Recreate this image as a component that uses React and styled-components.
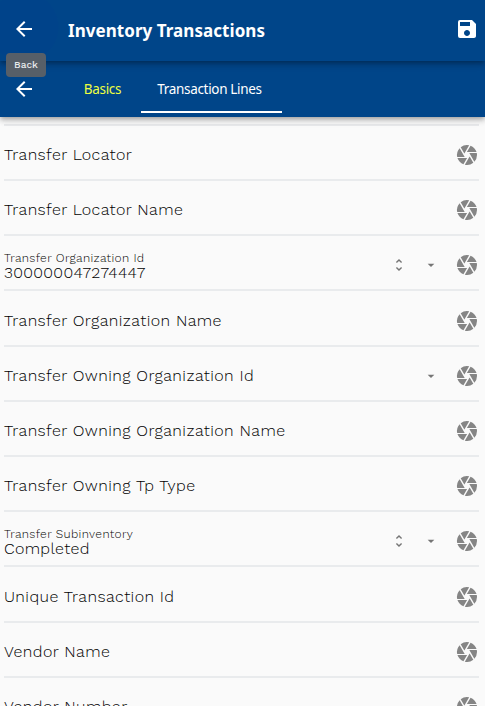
import React from 'react';
import styled, { createGlobalStyle } from 'styled-components';
import { MdArrowBack, MdSave, MdCamera, MdUnfoldMore, MdArrowDropDown } from 'react-icons/md';

const GlobalStyle = createGlobalStyle`
  * { box-sizing: border-box; }
  body { margin: 0; background: #fafafa; overflow: hidden; }
`;

const Screen = styled.div`
  width: 485px;
  height: 706px;
  overflow: hidden;
  display: flex;
  flex-direction: column;
  background: #fafafa;
  font-family: 'Work Sans', Inter, sans-serif;
`;

const AppBar = styled.header`
  position: relative;
  z-index: 3;
  flex: none;
  height: 61px;
  display: flex;
  align-items: center;
  padding: 0 6px 3px 12px;
  background: radial-gradient(circle at 24px 27px, #00438a 34px, #004589 35px);
  color: #fff;
  box-shadow: 0 2px 4px -1px rgba(0, 0, 0, 0.2), 0 4px 5px rgba(0, 0, 0, 0.14),
    0 1px 10px rgba(0, 0, 0, 0.12);
`;

const IconButton = styled.button`
  display: flex;
  padding: 0;
  border: 0;
  background: none;
  color: #fff;
`;

const Title = styled.h1`
  flex: 1;
  margin: 3px 0 0 32px;
  font: 700 17px/24px 'Noto Sans', sans-serif;
  letter-spacing: 0.05px;
  white-space: nowrap;
`;

const Tooltip = styled.div`
  position: absolute;
  left: 6px;
  top: 53px;
  width: 40px;
  height: 24px;
  display: flex;
  align-items: center;
  justify-content: center;
  padding-bottom: 2px;
  border-radius: 4px;
  background: #575f68;
  color: #e9ebed;
  font-size: 10px;
  font-weight: 500;
`;

const TabBar = styled.nav`
  position: relative;
  z-index: 2;
  flex: none;
  height: 56px;
  display: flex;
  align-items: center;
  padding-left: 12px;
  background: #004589;
  box-shadow: 0 2px 4px -1px rgba(0, 0, 0, 0.2), 0 4px 5px rgba(0, 0, 0, 0.14),
    0 1px 10px rgba(0, 0, 0, 0.12);
`;

const Tabs = styled.div`
  display: flex;
  align-self: flex-start;
  height: 52px;
  margin-left: 28px;
`;

const Tab = styled.div`
  width: ${(p) => p.$width}px;
  display: flex;
  align-items: center;
  justify-content: center;
  padding: ${(p) => (p.$active ? '6px 4px 0 0' : '4px 0 0')};
  border-bottom: ${(p) => (p.$active ? '2px solid #fff' : '0')};
  color: ${(p) => (p.$active ? '#fff' : '#eeff41')};
  font: 400 13.5px/20px 'Noto Sans', sans-serif;
  letter-spacing: -0.32px;
  white-space: nowrap;
`;

const Fields = styled.main`
  flex: none;
  display: flex;
  flex-direction: column;
  margin: 6.85px 6px 0 4px;
  border-top: 2px solid #e9eaec;
`;

const Field = styled.div`
  flex: none;
  height: 55.2px;
  display: flex;
  align-items: center;
  padding-top: 5.2px;
  border-bottom: 2px solid #e9ebed;
  color: #757575;
`;

const Texts = styled.div`
  flex: 1;
  display: flex;
  flex-direction: column;
  padding-top: ${(p) => (p.$filled ? 2 : 0)}px;
`;

const Label = styled.span`
  color: #000;
  font-size: ${(p) => (p.$small ? 12 : 16)}px;
  font-weight: 300;
  line-height: ${(p) => (p.$small ? 14 : 20)}px;
  letter-spacing: ${(p) => (p.$small ? 0.34 : 0.42)}px;
  white-space: nowrap;
`;

const Value = styled.span`
  color: #000;
  font-size: 16px;
  font-weight: 300;
  line-height: 16px;
  letter-spacing: 0.34px;
`;

const Action = styled.span`
  display: flex;
  justify-content: center;
  width: 32px;
`;

const Shutter = styled.span`
  display: flex;
  margin-left: 8px;
  color: #858585;
`;

const fields = [
  { label: 'Transfer Locator' },
  { label: 'Transfer Locator Name' },
  { label: 'Transfer Organization Id', value: '300000047274447', stepper: true, menu: true },
  { label: 'Transfer Organization Name' },
  { label: 'Transfer Owning Organization Id', menu: true },
  { label: 'Transfer Owning Organization Name' },
  { label: 'Transfer Owning Tp Type' },
  { label: 'Transfer Subinventory', value: 'Completed', stepper: true, menu: true },
  { label: 'Unique Transaction Id' },
  { label: 'Vendor Name' },
  { label: 'Vendor Number' },
];

export default function App() {
  return (
    <Screen>
      <GlobalStyle />
      <AppBar>
        <IconButton aria-label="Back"><MdArrowBack size={24} /></IconButton>
        <Title>Inventory Transactions</Title>
        <IconButton aria-label="Save"><MdSave size={24} /></IconButton>
        <Tooltip>Back</Tooltip>
      </AppBar>
      <TabBar>
        <IconButton aria-label="Back"><MdArrowBack size={24} /></IconButton>
        <Tabs>
          <Tab $width={77}>Basics</Tab>
          <Tab $width={141} $active>Transaction Lines</Tab>
        </Tabs>
      </TabBar>
      <Fields>
        {fields.map((f) => (
          <Field key={f.label}>
            <Texts $filled={Boolean(f.value)}>
              <Label $small={Boolean(f.value)}>{f.label}</Label>
              {f.value && <Value>{f.value}</Value>}
            </Texts>
            {f.stepper && <Action><MdUnfoldMore size={16} /></Action>}
            {f.menu && <Action><MdArrowDropDown size={16} /></Action>}
            <Shutter><MdCamera size={24} /></Shutter>
          </Field>
        ))}
      </Fields>
    </Screen>
  );
}
